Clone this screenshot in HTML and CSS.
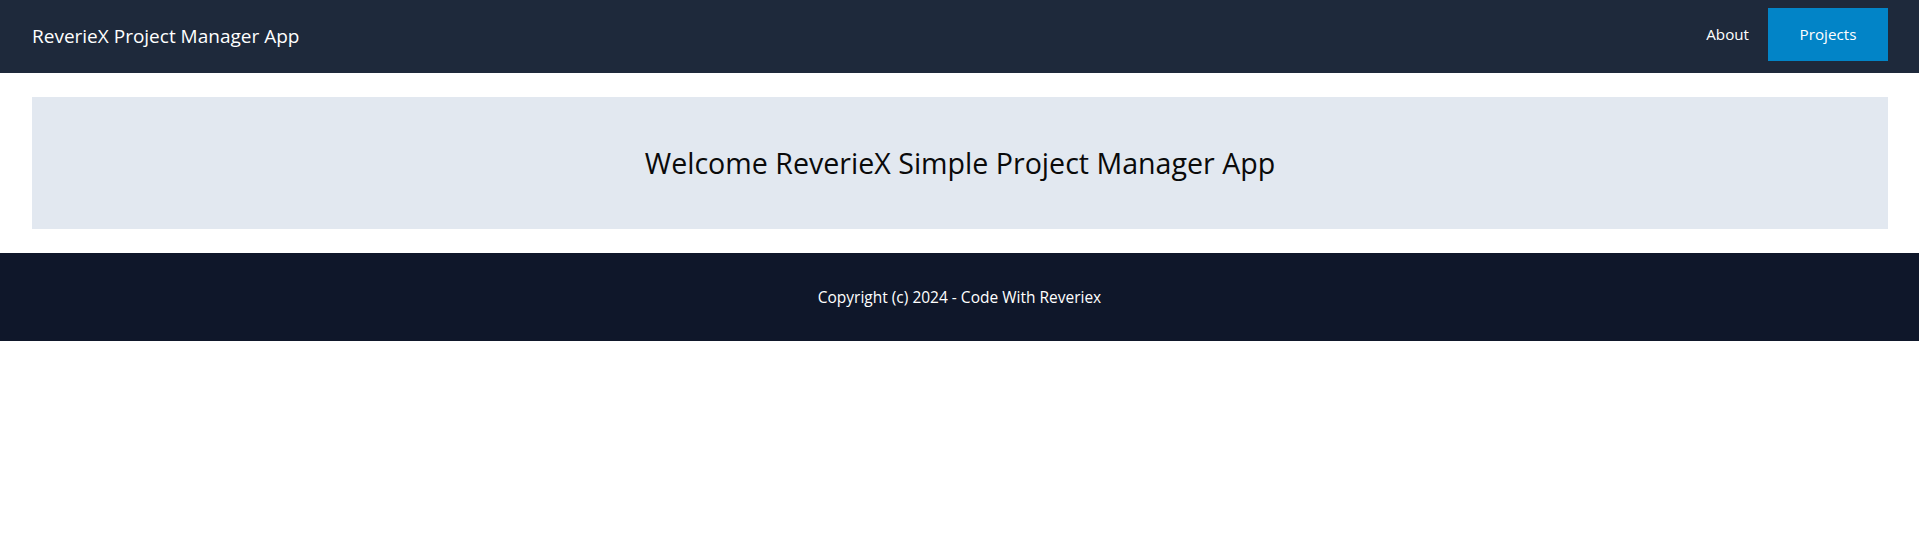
FILE: index.html
```html
<!DOCTYPE html>
<html lang="en">
<head>
<meta charset="utf-8">
<title>ReverieX Project Manager App</title>
<link rel="stylesheet" href="styles.css">
</head>
<body>
<header class="topbar">
  <a class="brand" href="#">ReverieX Project Manager App</a>
  <nav class="nav">
    <a class="nav-link" href="#">About</a>
    <a class="nav-link nav-link-active" href="#">Projects</a>
  </nav>
</header>
<main class="content">
  <section class="hero">
    <h1 class="hero-title">Welcome ReverieX Simple Project Manager App</h1>
  </section>
</main>
<footer class="footer">
  <p class="footer-text">Copyright (c) 2024 - Code With Reveriex</p>
</footer>
</body>
</html>
```
FILE: styles.css
```css
* { box-sizing: border-box; }
body {
  margin: 0;
  font-family: "Open Sans", "Noto Sans", sans-serif;
  background: #ffffff;
  color: #111111;
}
a { text-decoration: none; }
.topbar {
  display: flex;
  justify-content: space-between;
  align-items: center;
  background: #1e293b;
  padding: 8px 31px 12px 32px;
  height: 73px;
}
.brand {
  color: #ffffff;
  font-size: 19px;
  line-height: 28px;
  padding-top: 2px;
}
.nav {
  display: flex;
  align-items: center;
}
.nav-link {
  color: #ffffff;
  font-size: 15.2px;
  line-height: 25px;
  padding: 14px 19px 14px 16px;
}
.nav-link-active {
  background: #0284c7;
  width: 120px;
  padding: 14px 0;
  text-align: center;
}
.content {
  padding: 24px 31px 24px 32px;
}
.hero {
  background: #e2e8f0;
  height: 132px;
  display: flex;
  align-items: center;
  justify-content: center;
}
.hero-title {
  margin: 0;
  font-weight: 400;
  font-size: 28.6px;
  line-height: 36px;
  color: #0a0a0a;
}
.footer {
  background: #0f172a;
  height: 88px;
  display: flex;
  align-items: center;
  justify-content: center;
}
.footer-text {
  margin: 0;
  color: #ffffff;
  font-size: 15.5px;
  line-height: 24px;
}
```
